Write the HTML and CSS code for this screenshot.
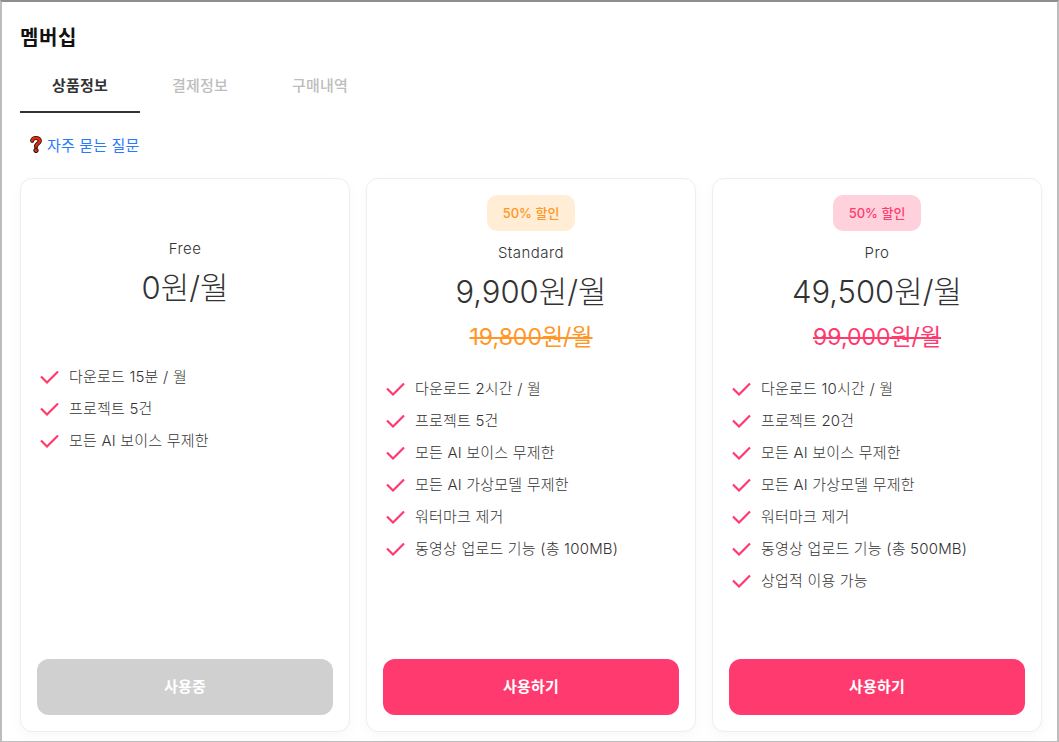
FILE: index.html
```html
<!DOCTYPE html>
<html lang="ko">
<head>
<meta charset="utf-8">
<title>멤버십</title>
<link rel="stylesheet" href="styles.css">
</head>
<body>
<div class="frame">
  <h1 class="title">멤버십</h1>
  <nav class="tabs">
    <a class="tab active">상품정보</a>
    <a class="tab">결제정보</a>
    <a class="tab">구매내역</a>
  </nav>
  <div class="faq">
    <svg class="faq-icon" viewBox="0 0 14 18" width="14" height="18">
      <path d="M3.2 5.8 C3.2 2.2 10.8 2 10.8 5.8 C10.8 8.4 7.4 8.4 7 11.4" fill="none" stroke="#111" stroke-width="4.2" stroke-linecap="round"/>
      <circle cx="7" cy="15.4" r="2.2" fill="#e8290b" stroke="#111" stroke-width="1"/>
      <path d="M3.2 5.8 C3.2 2.2 10.8 2 10.8 5.8 C10.8 8.4 7.4 8.4 7 11.4" fill="none" stroke="#e8290b" stroke-width="2.6" stroke-linecap="round"/>
    </svg>
    <a class="faq-link">자주 묻는 질문</a>
  </div>
  <div class="cards">
    <section class="card free">
      <div class="head">
        <div class="name">Free</div>
        <div class="price">0원/월</div>
      </div>
      <ul class="features">
        <li><svg class="check" viewBox="0 0 20 14"><path d="M2 6.5 L8 12.5 L19 1.5"/></svg>다운로드 15분 / 월</li>
        <li><svg class="check" viewBox="0 0 20 14"><path d="M2 6.5 L8 12.5 L19 1.5"/></svg>프로젝트 5건</li>
        <li><svg class="check" viewBox="0 0 20 14"><path d="M2 6.5 L8 12.5 L19 1.5"/></svg>모든 AI 보이스 무제한</li>
      </ul>
      <button class="cta disabled">사용중</button>
    </section>
    <section class="card">
      <div class="head">
        <span class="badge orange">50% 할인</span>
        <div class="name">Standard</div>
        <div class="price">9,900원/월</div>
        <div class="old orange-text">19,800원/월</div>
      </div>
      <ul class="features">
        <li><svg class="check" viewBox="0 0 20 14"><path d="M2 6.5 L8 12.5 L19 1.5"/></svg>다운로드 2시간 / 월</li>
        <li><svg class="check" viewBox="0 0 20 14"><path d="M2 6.5 L8 12.5 L19 1.5"/></svg>프로젝트 5건</li>
        <li><svg class="check" viewBox="0 0 20 14"><path d="M2 6.5 L8 12.5 L19 1.5"/></svg>모든 AI 보이스 무제한</li>
        <li><svg class="check" viewBox="0 0 20 14"><path d="M2 6.5 L8 12.5 L19 1.5"/></svg>모든 AI 가상모델 무제한</li>
        <li><svg class="check" viewBox="0 0 20 14"><path d="M2 6.5 L8 12.5 L19 1.5"/></svg>워터마크 제거</li>
        <li><svg class="check" viewBox="0 0 20 14"><path d="M2 6.5 L8 12.5 L19 1.5"/></svg>동영상 업로드 기능 (총 100MB)</li>
      </ul>
      <button class="cta">사용하기</button>
    </section>
    <section class="card">
      <div class="head">
        <span class="badge pink">50% 할인</span>
        <div class="name">Pro</div>
        <div class="price">49,500원/월</div>
        <div class="old pink-text">99,000원/월</div>
      </div>
      <ul class="features">
        <li><svg class="check" viewBox="0 0 20 14"><path d="M2 6.5 L8 12.5 L19 1.5"/></svg>다운로드 10시간 / 월</li>
        <li><svg class="check" viewBox="0 0 20 14"><path d="M2 6.5 L8 12.5 L19 1.5"/></svg>프로젝트 20건</li>
        <li><svg class="check" viewBox="0 0 20 14"><path d="M2 6.5 L8 12.5 L19 1.5"/></svg>모든 AI 보이스 무제한</li>
        <li><svg class="check" viewBox="0 0 20 14"><path d="M2 6.5 L8 12.5 L19 1.5"/></svg>모든 AI 가상모델 무제한</li>
        <li><svg class="check" viewBox="0 0 20 14"><path d="M2 6.5 L8 12.5 L19 1.5"/></svg>워터마크 제거</li>
        <li><svg class="check" viewBox="0 0 20 14"><path d="M2 6.5 L8 12.5 L19 1.5"/></svg>동영상 업로드 기능 (총 500MB)</li>
        <li><svg class="check" viewBox="0 0 20 14"><path d="M2 6.5 L8 12.5 L19 1.5"/></svg>상업적 이용 가능</li>
      </ul>
      <button class="cta">사용하기</button>
    </section>
  </div>
</div>
</body>
</html>
```
FILE: styles.css
```css
* { box-sizing: border-box; }
html, body { margin: 0; height: 100%; overflow: hidden; }
body { font-family: Inter, "Noto Sans CJK KR", sans-serif; color: #333; background: #fff; }
.frame {
  width: 1059px; height: 742px;
  border: 2px solid #bdbdbd;
  border-top-color: #8e8e8e;
  border-bottom-width: 1px;
  padding: 0 15px 0 18px;
  display: flex; flex-direction: column;
  background: #fff;
}
.title { margin: 22px 0 0; font-size: 20px; line-height: 28px; font-weight: 700; color: #111; letter-spacing: .6px; }
.tabs { display: flex; margin-top: 10px; }
.tab {
  width: 120px; height: 51px; line-height: 48px;
  text-align: center; font-size: 15px; letter-spacing: .2px; font-weight: 500; color: #bdbdbd;
}
.tab.active { color: #333; font-weight: 600; border-bottom: 2px solid #333; }
.faq { display: flex; align-items: center; gap: 4px; margin: 21px 0 0 9px; height: 20px; }
.faq-icon { display: block; flex: none; }
.faq-link { font-size: 15px; letter-spacing: .15px; color: #2979ff; }
.cards { display: grid; grid-template-columns: repeat(3, 330px); gap: 16px; margin-top: 24px; }
.card {
  height: 554px;
  border: 1px solid #eee; border-radius: 12px;
  background: #fff;
  box-shadow: 0 4px 14px rgba(0,0,0,.03);
  padding: 16px;
  display: flex; flex-direction: column;
}
.head { display: flex; flex-direction: column; align-items: center; }
.free .head { padding-top: 44px; height: 148px; }
.badge {
  width: 88px; height: 36px; border-radius: 10px;
  font-size: 13px; font-weight: 500; line-height: 36px; text-align: center;
}
.badge.orange { background: #ffedd5; color: #ff9626; }
.badge.pink { background: #ffd1dc; color: #ff3a6e; }
.name { font-size: 15px; font-weight: 300; letter-spacing: .45px; line-height: 20px; margin-top: 12px; color: #333; }
.free .name { margin-top: 0; }
.price { font-size: 31px; font-weight: 300; line-height: 40px; margin-top: 9px; color: #333; }
.free .price { margin-top: 9px; }
.old { font-size: 23px; font-weight: 400; line-height: 30px; margin-top: 10px; text-decoration: line-through; }
.orange-text { color: #ff9626; }
.pink-text { color: #ff3a6e; }
.features { list-style: none; margin: 20px 0 0; padding: 0 0 0 2px; display: flex; flex-direction: column; flex: 1; }
.free .features { margin-top: 17px; }
.features li { display: flex; align-items: center; height: 32px; padding-bottom: 2px; font-size: 15px; font-weight: 300; letter-spacing: .2px; color: #333; }
.check { width: 20px; height: 14px; margin: 4px 10px 0 0; flex: none; }
.check path { fill: none; stroke: #ff3a6e; stroke-width: 2.2; }
.cta {
  height: 56px; width: 100%; border: 0; border-radius: 12px;
  padding: 0 0 4px;
  background: #ff3a6e; color: #fff;
  font-family: inherit; font-size: 15px; letter-spacing: .2px; font-weight: 700;
}
.cta.disabled { background: #d0d0d0; }
```
